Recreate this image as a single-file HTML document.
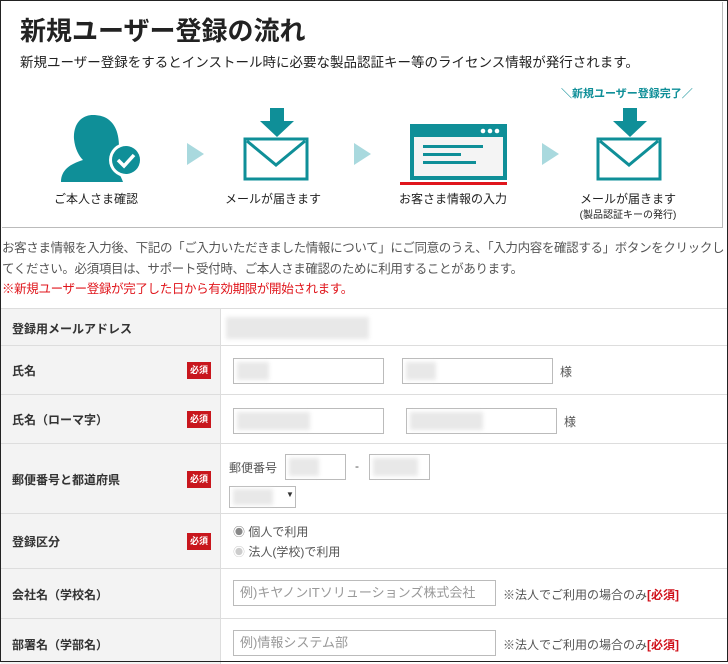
<!DOCTYPE html><html><head><meta charset="utf-8"><style>
*{margin:0;padding:0;box-sizing:border-box}
body{width:728px;height:662px;overflow:hidden;background:#fff;font-family:"Liberation Sans","Noto Sans CJK JP",sans-serif;color:#333;position:relative}
.frame{position:absolute;left:0;top:0;width:728px;height:662px;border:1px solid #222;pointer-events:none;z-index:5}
.a{position:absolute;white-space:nowrap}
.top{position:absolute;left:2px;top:2px;width:721px;height:226px;border:1px solid #bbb;border-top:none;border-left:none}
.t{color:#0f8f98}
.lab{font-size:12px;color:#222;transform:translateX(-50%)}
.tri{width:0;height:0;border-top:11px solid transparent;border-bottom:11px solid transparent;border-left:17px solid #a9d9de}
.row{position:absolute;left:1px;width:726px;border-top:1px solid #ddd}
.lc{position:absolute;left:0;top:0;bottom:0;width:220px;background:#f3f3f3;border-right:1px solid #ddd}
.lt{position:absolute;left:11px;font-size:12px;font-weight:bold;color:#333}
.req{position:absolute;left:186px;width:24px;height:17px;background:#c8161d;color:#fff;font-size:9px;font-weight:bold;text-align:center;line-height:17px}
.in{position:absolute;border:1px solid #bbb;height:26px;background:#fff}
.blur{position:absolute;background:#e8e8e8;filter:blur(2px)}
.ph{font-size:13px;color:#999;padding-left:6px;line-height:24px}
</style></head><body>
<div class="frame"></div>
<div class="top"></div>
<div class="a" style="left:20px;top:11px;font-size:26px;font-weight:bold;color:#222">新規ユーザー登録の流れ</div>
<div class="a" style="left:20px;top:51px;font-size:13.5px;color:#222">新規ユーザー登録をするとインストール時に必要な製品認証キー等のライセンス情報が発行されます。</div>
<div class="a t" style="left:561px;top:85px;font-size:11px;font-weight:bold">＼新規ユーザー登録完了／</div>
<svg class="a" style="left:60px;top:113px" width="90" height="70"><path d="M33 2c-13 0-20 11-19 24 1 10 5 17 9 21-13 4-22 10-22 22h62c-2-6-6-12-10-15 3-5 6-12 6-20C59 12 49 2 33 2z" fill="#0f8f98"/><circle cx="66" cy="47" r="17" fill="#fff"/><circle cx="66" cy="47" r="14" fill="#0f8f98"/><path d="M58 47l6 6 10-11" stroke="#fff" stroke-width="3.5" fill="none"/></svg>
<div class="a tri" style="left:187px;top:143px"></div>
<div class="a tri" style="left:354px;top:143px"></div>
<div class="a tri" style="left:542px;top:143px"></div>
<svg class="a" style="left:243px;top:107px" width="68" height="76"><path d="M27 1h14v13h10L34 30 17 14h10z" fill="#0f8f98"/><rect x="2" y="32" width="62" height="40" fill="none" stroke="#0f8f98" stroke-width="3"/><path d="M4 34l29 24 29-24" fill="none" stroke="#0f8f98" stroke-width="3"/></svg>
<svg class="a" style="left:596px;top:107px" width="68" height="76"><path d="M27 1h14v13h10L34 30 17 14h10z" fill="#0f8f98"/><rect x="2" y="32" width="62" height="40" fill="none" stroke="#0f8f98" stroke-width="3"/><path d="M4 34l29 24 29-24" fill="none" stroke="#0f8f98" stroke-width="3"/></svg>
<svg class="a" style="left:410px;top:124px" width="98" height="57"><rect x="0" y="0" width="97" height="56" fill="#0f8f98"/><rect x="4" y="13" width="89" height="39" fill="#f4f4f4"/><circle cx="73" cy="7" r="2.3" fill="#fff"/><circle cx="80" cy="7" r="2.3" fill="#fff"/><circle cx="87" cy="7" r="2.3" fill="#fff"/><rect x="13" y="21" width="60" height="3" fill="#0f8f98"/><rect x="13" y="29" width="38" height="3" fill="#0f8f98"/><rect x="13" y="37" width="53" height="3" fill="#0f8f98"/></svg>
<div class="a" style="left:400px;top:182px;width:107px;height:3px;background:#e0161c"></div>
<div class="a lab" style="left:96px;top:190px">ご本人さま確認</div>
<div class="a lab" style="left:273px;top:190px">メールが届きます</div>
<div class="a lab" style="left:453px;top:190px">お客さま情報の入力</div>
<div class="a lab" style="left:628px;top:190px">メールが届きます</div>
<div class="a lab" style="left:628px;top:206px;font-size:10px">(製品認証キーの発行)</div>
<div class="a" style="left:2px;top:238px;font-size:12.5px;letter-spacing:-0.35px;color:#555;line-height:20.5px">お客さま情報を入力後、下記の「ご入力いただきました情報について」にご同意のうえ、「入力内容を確認する」ボタンをクリックし<br>てください。必須項目は、サポート受付時、ご本人さま確認のために利用することがあります。<br><span style="color:#e0161c">※新規ユーザー登録が完了した日から有効期限が開始されます。</span></div>

<div class="row" style="top:308px;height:37px"><div class="lc"></div><div class="lt" style="top:11px">登録用メールアドレス</div><div class="blur" style="left:225px;top:8px;width:143px;height:22px"></div></div>
<div class="row" style="top:345px;height:49px"><div class="lc"></div><div class="lt" style="top:16px">氏名</div><div class="req" style="top:16px">必須</div>
<div class="in" style="left:232px;top:12px;width:151px"></div><div class="blur" style="left:236px;top:16px;width:32px;height:18px"></div>
<div class="in" style="left:401px;top:12px;width:151px"></div><div class="blur" style="left:405px;top:16px;width:30px;height:18px"></div>
<div class="a" style="left:559px;top:17px;font-size:12px;color:#555">様</div></div>
<div class="row" style="top:394px;height:49px"><div class="lc"></div><div class="lt" style="top:16px">氏名（ローマ字）</div><div class="req" style="top:16px">必須</div>
<div class="in" style="left:232px;top:13px;width:151px"></div><div class="blur" style="left:236px;top:17px;width:73px;height:18px"></div>
<div class="in" style="left:405px;top:13px;width:151px"></div><div class="blur" style="left:409px;top:17px;width:73px;height:18px"></div>
<div class="a" style="left:563px;top:18px;font-size:12px;color:#555">様</div></div>
<div class="row" style="top:443px;height:70px"><div class="lc"></div><div class="lt" style="top:27px">郵便番号と都道府県</div><div class="req" style="top:27px">必須</div>
<div class="a" style="left:228px;top:15px;font-size:12px;color:#555">郵便番号</div>
<div class="in" style="left:284px;top:10px;width:61px"></div><div class="blur" style="left:288px;top:14px;width:30px;height:18px"></div>
<div class="a" style="left:354px;top:15px;font-size:12px;color:#555">-</div>
<div class="in" style="left:368px;top:10px;width:61px;"></div><div class="blur" style="left:372px;top:14px;width:45px;height:18px"></div>
<div class="in" style="left:228px;top:42px;width:67px;height:22px"></div><div class="blur" style="left:232px;top:45px;width:40px;height:16px"></div>
<div class="a" style="left:285px;top:46px;font-size:8px;color:#333">▼</div></div>
<div class="row" style="top:513px;height:55px"><div class="lc"></div><div class="lt" style="top:19px">登録区分</div><div class="req" style="top:19px">必須</div>
<div class="a" style="left:232px;top:9px;font-size:12px;color:#555"><span style="color:#888">◉</span> 個人で利用</div>
<div class="a" style="left:232px;top:29px;font-size:12px;color:#555"><span style="color:#ccc">◉</span> 法人(学校)で利用</div></div>
<div class="row" style="top:568px;height:50px"><div class="lc"></div><div class="lt" style="top:17px">会社名（学校名）</div>
<div class="in ph" style="left:232px;top:11px;width:263px">例)キヤノンITソリューションズ株式会社</div>
<div class="a" style="left:502px;top:17px;font-size:12px;color:#555">※法人でご利用の場合のみ<b style="color:#d0121b">[必須]</b></div></div>
<div class="row" style="top:618px;height:46px"><div class="lc"></div><div class="lt" style="top:17px">部署名（学部名）</div>
<div class="in ph" style="left:232px;top:11px;width:263px">例)情報システム部</div>
<div class="a" style="left:502px;top:17px;font-size:12px;color:#555">※法人でご利用の場合のみ<b style="color:#d0121b">[必須]</b></div></div>
</body></html>
